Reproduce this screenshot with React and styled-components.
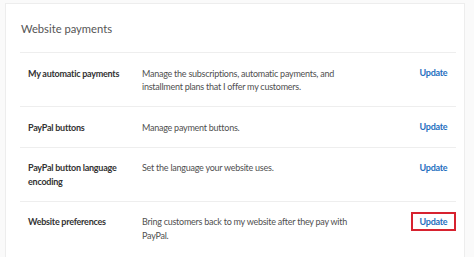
import React from "react";
import styled, { createGlobalStyle } from "styled-components";

const Global = createGlobalStyle`
  html, body { margin: 0; padding: 0; background: #fafafa; }
  body { font-family: "Lato", "Open Sans", "Liberation Sans", sans-serif; }
`;

const Card = styled.section`
  margin: 3px 0 0 5px;
  width: 460px;
  box-sizing: border-box;
  background: #fff;
  border: 1px solid #ededed;
  border-bottom: none;
  padding: 0 8px 0 14px;
  height: 260px;
`;

const Title = styled.h2`
  margin: 0;
  height: 48px;
  display: flex;
  align-items: center;
  padding: 0 0 0 1px;
  font-weight: 400;
  font-size: 11.2px;
  color: #555;
`;

const Row = styled.div`
  display: grid;
  grid-template-columns: 114px 1fr 45px;
  align-items: start;
  border-top: 1px solid #eeeeee;
  padding: 13.5px 0 12.5px 8px;
  font-size: 9px;
  line-height: 13.5px;
  letter-spacing: -0.25px;
  color: #444;
`;

const Label = styled.div`
  font-weight: 700;
  color: #333;
  padding-right: 4px;
`;

const Desc = styled.div`
  color: #505050;
  max-width: 212px;
`;

const UpdateBtn = styled.a`
  justify-self: end;
  box-sizing: border-box;
  width: 45px;
  height: 19px;
  margin: -3px 0 -2.5px;
  display: flex;
  align-items: center;
  justify-content: center;
  font-weight: 700;
  color: #1f6fc0;
  text-decoration: none;
  border: 2px solid ${(p) => (p.$highlight ? "#d7222f" : "transparent")};
`;

const rows = [
  {
    label: "My automatic payments",
    desc: "Manage the subscriptions, automatic payments, and installment plans that I offer my customers.",
  },
  { label: "PayPal buttons", desc: "Manage payment buttons." },
  { label: "PayPal button language encoding", desc: "Set the language your website uses." },
  {
    label: "Website preferences",
    desc: "Bring customers back to my website after they pay with PayPal.",
    highlight: true,
  },
];

export default function App() {
  return (
    <>
      <Global />
      <Card>
        <Title>Website payments</Title>
        {rows.map((r) => (
          <Row key={r.label}>
            <Label>{r.label}</Label>
            <Desc>{r.desc}</Desc>
            <UpdateBtn href="#" $highlight={r.highlight}>Update</UpdateBtn>
          </Row>
        ))}
      </Card>
    </>
  );
}
